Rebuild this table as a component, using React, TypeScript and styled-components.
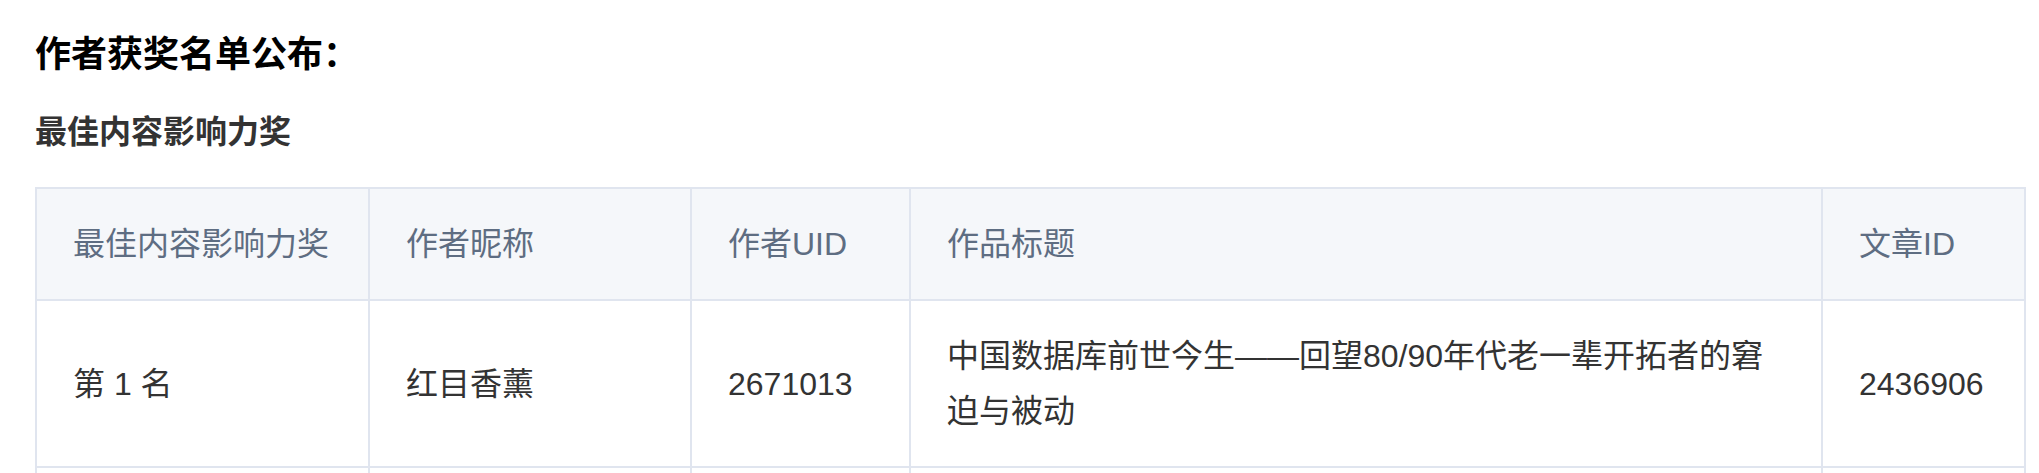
import React from 'react';
import styled, { createGlobalStyle } from 'styled-components';

interface Column {
  title: string;
  width: number;
}

interface Winner {
  rank: string;
  nickname: string;
  uid: string;
  articleTitle: string;
  articleId: string;
}

const columns: Column[] = [
  { title: '最佳内容影响力奖', width: 333 },
  { title: '作者昵称', width: 322 },
  { title: '作者UID', width: 219 },
  { title: '作品标题', width: 912 },
  { title: '文章ID', width: 203 },
];

// second row only shows its borders in the shot, so its cells are left blank
const winners: Winner[] = [
  {
    rank: '第 1 名',
    nickname: '红目香薰',
    uid: '2671013',
    articleTitle: '中国数据库前世今生——回望80/90年代老一辈开拓者的窘迫与被动',
    articleId: '2436906',
  },
  {
    rank: '',
    nickname: '',
    uid: '',
    articleTitle: '',
    articleId: '',
  },
];

const GlobalStyle = createGlobalStyle`
  body {
    margin: 0;
    background: #ffffff;
    font-family: "Liberation Sans", "Noto Sans CJK SC", sans-serif;
  }
`;

const App = () => {
  return (
    <>
      <GlobalStyle />
      <Page>
        <Title>作者获奖名单公布：</Title>
        <SubTitle>最佳内容影响力奖</SubTitle>
        <AwardTable>
          <colgroup>
            {columns.map((col) => (
              <col key={col.title} style={{ width: col.width }} />
            ))}
          </colgroup>
          <thead>
            <tr>
              {columns.map((col) => (
                <HeadCell key={col.title}>{col.title}</HeadCell>
              ))}
            </tr>
          </thead>
          <tbody>
            {winners.map((w, i) => (
              <tr key={i}>
                <Cell>{w.rank || '\u00a0'}</Cell>
                <Cell>{w.nickname}</Cell>
                <Cell>{w.uid}</Cell>
                <Cell>{w.articleTitle}</Cell>
                <Cell>{w.articleId}</Cell>
              </tr>
            ))}
          </tbody>
        </AwardTable>
      </Page>
    </>
  );
};

export default App;

const Page = styled.div`
  padding: 28px 0 40px 35px;
`;

const Title = styled.h2`
  margin: 0 0 26px;
  font-size: 36px;
  line-height: 54px;
  font-weight: 700;
  color: #000000;
`;

const SubTitle = styled.h3`
  margin: 0 0 31px;
  font-size: 32px;
  line-height: 48px;
  font-weight: 700;
  color: #333333;
`;

const AwardTable = styled.table`
  width: 1989px;
  table-layout: fixed;
  border-collapse: collapse;
  border: 2px solid #e0e5ef;
  font-size: 32px;
  line-height: 1.7;
`;

const HeadCell = styled.th`
  padding: 28px 36px;
  border: 2px solid #e0e5ef;
  background: #f5f7fa;
  color: #5e6d82;
  font-weight: 400;
  text-align: left;
  vertical-align: middle;
`;

const Cell = styled.td`
  padding: 28px 36px;
  border: 2px solid #e0e5ef;
  color: #333333;
  text-align: left;
  vertical-align: middle;
  word-break: break-all;
`;
